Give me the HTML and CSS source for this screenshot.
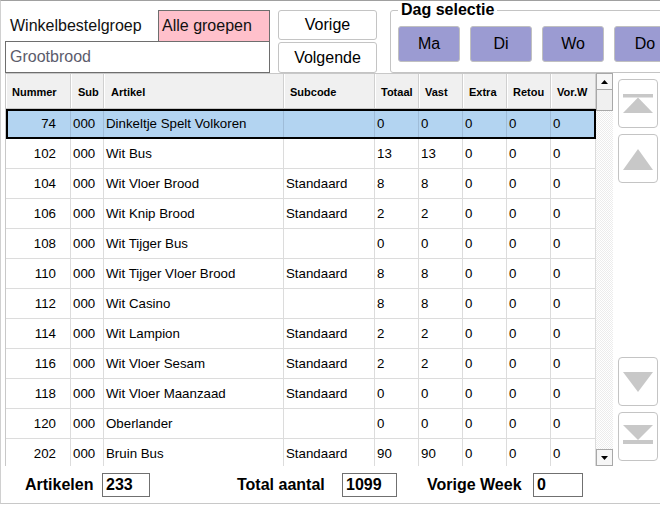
FILE: index.html
```html
<!DOCTYPE html>
<html>
<head>
<meta charset="utf-8">
<link rel="stylesheet" href="styles.css">
</head>
<body>
<div class="page">
  <div class="top">
    <div class="groep">
      <div class="groep-row">
        <span class="lbl">Winkelbestelgroep</span>
        <span class="pink">Alle groepen</span>
      </div>
      <div class="input">Grootbrood</div>
    </div>
    <div class="nav">
      <button class="btn">Vorige</button>
      <button class="btn btn-tall">Volgende</button>
    </div>
    <fieldset class="dag">
      <legend>Dag selectie</legend>
      <div class="days">
        <button class="day">Ma</button>
        <button class="day">Di</button>
        <button class="day">Wo</button>
        <button class="day">Do</button>
      </div>
    </fieldset>
  </div>

  <div class="main">
    <div class="grid">
      <div class="table">
        <div class="row thead">
          <span>Nummer</span><span class="p7">Sub</span><span class="p7">Artikel</span><span>Subcode</span><span>Totaal</span><span>Vast</span><span>Extra</span><span>Retou</span><span>Vor.W</span>
        </div>
        <div class="row tr sel"><span class="num">74</span><span>000</span><span>Dinkeltje Spelt Volkoren</span><span></span><span>0</span><span>0</span><span>0</span><span>0</span><span>0</span></div>
        <div class="row tr"><span class="num">102</span><span>000</span><span>Wit Bus</span><span></span><span>13</span><span>13</span><span>0</span><span>0</span><span>0</span></div>
        <div class="row tr"><span class="num">104</span><span>000</span><span>Wit Vloer Brood</span><span>Standaard</span><span>8</span><span>8</span><span>0</span><span>0</span><span>0</span></div>
        <div class="row tr"><span class="num">106</span><span>000</span><span>Wit Knip Brood</span><span>Standaard</span><span>2</span><span>2</span><span>0</span><span>0</span><span>0</span></div>
        <div class="row tr"><span class="num">108</span><span>000</span><span>Wit Tijger Bus</span><span></span><span>0</span><span>0</span><span>0</span><span>0</span><span>0</span></div>
        <div class="row tr"><span class="num">110</span><span>000</span><span>Wit Tijger Vloer Brood</span><span>Standaard</span><span>8</span><span>8</span><span>0</span><span>0</span><span>0</span></div>
        <div class="row tr"><span class="num">112</span><span>000</span><span>Wit Casino</span><span></span><span>8</span><span>8</span><span>0</span><span>0</span><span>0</span></div>
        <div class="row tr"><span class="num">114</span><span>000</span><span>Wit Lampion</span><span>Standaard</span><span>2</span><span>2</span><span>0</span><span>0</span><span>0</span></div>
        <div class="row tr"><span class="num">116</span><span>000</span><span>Wit Vloer Sesam</span><span>Standaard</span><span>2</span><span>2</span><span>0</span><span>0</span><span>0</span></div>
        <div class="row tr"><span class="num">118</span><span>000</span><span>Wit Vloer Maanzaad</span><span>Standaard</span><span>0</span><span>0</span><span>0</span><span>0</span><span>0</span></div>
        <div class="row tr"><span class="num">120</span><span>000</span><span>Oberlander</span><span></span><span>0</span><span>0</span><span>0</span><span>0</span><span>0</span></div>
        <div class="row tr"><span class="num">202</span><span>000</span><span>Bruin Bus</span><span>Standaard</span><span>90</span><span>90</span><span>0</span><span>0</span><span>0</span></div>
      </div>
      <div class="scroll">
        <div class="sb-btn"><svg width="7" height="4" viewBox="0 0 7 4"><polygon points="0,4 7,4 3.5,0" fill="#000"/></svg></div>
        <div class="sb-thumb"></div>
        <div class="sb-track"></div>
        <div class="sb-btn"><svg width="7" height="4" viewBox="0 0 7 4"><polygon points="0,0 7,0 3.5,4" fill="#000"/></svg></div>
      </div>
    </div>
    <div class="side">
      <button class="side-btn"><svg width="38" height="47" viewBox="0 0 38 47"><rect x="4" y="14" width="30" height="3.5" fill="#c8c8c8"/><polygon points="4,33 34,33 19,17.5" fill="#c8c8c8"/></svg></button>
      <button class="side-btn"><svg width="38" height="47" viewBox="0 0 38 47"><polygon points="4,35 34,35 19,14" fill="#c8c8c8"/></svg></button>
      <button class="side-btn push"><svg width="38" height="47" viewBox="0 0 38 47"><polygon points="4,14 34,14 19,34" fill="#c8c8c8"/></svg></button>
      <button class="side-btn"><svg width="38" height="47" viewBox="0 0 38 47"><polygon points="4,12 34,12 19,27" fill="#c8c8c8"/><rect x="4" y="27" width="30" height="4" fill="#c8c8c8"/></svg></button>
    </div>
  </div>

  <div class="footer">
    <span class="f-lbl f1">Artikelen</span>
    <span class="f-box b1">233</span>
    <span class="f-lbl f2">Total aantal</span>
    <span class="f-box b2">1099</span>
    <span class="f-lbl f3">Vorige Week</span>
    <span class="f-box b3">0</span>
  </div>
</div>
</body>
</html>
```
FILE: styles.css
```css
html, body {
  margin: 0;
  padding: 0;
  background: #fff;
}

.page {
  width: 660px;
  height: 504px;
  box-sizing: border-box;
  border-top: 1px solid #a0a0a0;
  border-left: 1px solid #d0d0d0;
  border-bottom: 1px solid #c8c8c8;
  overflow: hidden;
  display: flex;
  flex-direction: column;
  font-family: "Liberation Sans", Arial, sans-serif;
  color: #000;
}

/* ---------- top ---------- */
.top {
  display: flex;
  height: 72px;
  flex: none;
}

.groep {
  margin-left: 4px;
  width: 265px;
  flex: none;
}

.groep-row {
  display: flex;
  margin-top: 9px;
  height: 32px;
}

.lbl {
  width: 153px;
  box-sizing: border-box;
  padding-left: 5px;
  font-size: 16px;
  line-height: 32px;
  color: #111;
}

.pink {
  width: 112px;
  box-sizing: border-box;
  border: 1px solid #6e6e6e;
  background: #ffc0cb;
  padding-left: 3px;
  font-size: 16px;
  line-height: 30px;
  color: #111;
}

.input {
  margin-top: -1px;
  height: 32px;
  box-sizing: border-box;
  border: 1px solid #6e6e6e;
  padding-left: 4px;
  font-size: 16px;
  line-height: 30px;
  color: #5c5c6c;
}

.nav {
  margin-left: 8px;
  padding-top: 9px;
  width: 99px;
  flex: none;
  display: flex;
  flex-direction: column;
  gap: 2px;
}

.btn {
  height: 30px;
  box-sizing: border-box;
  border: 1px solid #c4c4c4;
  border-radius: 3px;
  background: #fff;
  padding: 0;
  font-family: "Liberation Sans", Arial, sans-serif;
  font-size: 16px;
  color: #000;
}

.btn-tall {
  height: 31px;
}

.dag {
  margin: 0 0 0 13px;
  padding: 7px 0 10px 7px;
  border: 1px solid #c4c4c4;
  border-radius: 3px;
  flex: none;
  min-width: 0;
}

.dag legend {
  padding: 0 3px;
  font-size: 16px;
  font-weight: bold;
  line-height: 18px;
}

.days {
  display: flex;
  gap: 10px;
}

.day {
  width: 62px;
  height: 36px;
  box-sizing: border-box;
  border: 1px solid #c0c0c0;
  border-radius: 3px;
  background: #9b9bd2;
  padding: 0;
  font-family: "Liberation Sans", Arial, sans-serif;
  font-size: 16px;
  color: #000;
}

/* ---------- grid ---------- */
.main {
  display: flex;
  height: 393px;
  flex: none;
}

.grid {
  margin-left: 4px;
  display: flex;
  border-left: 1px solid #c8c8c8;
  flex: none;
}

.table {
  width: 590px;
  display: flex;
  flex-direction: column;
  overflow: hidden;
}

.row {
  display: grid;
  grid-template-columns: 65px 33px 180px 91px 44px 44px 44px 44px 45px;
  flex: none;
}

.row > span {
  box-sizing: border-box;
  white-space: nowrap;
  overflow: hidden;
}

.thead {
  height: 36px;
  box-sizing: border-box;
  border-top: 1px solid #c8c8c8;
  border-bottom: 1px solid #c8c8c8;
  background: #f0f0f0;
}

.thead > span {
  padding-left: 6px;
  padding-top: 2px;
  line-height: 32px;
  font-size: 11px;
  font-weight: bold;
  border-right: 1px solid #d0d0d0;
  box-shadow: inset 1px 0 0 #fff;
}

.thead > span.p7 {
  padding-left: 7px;
}

.tr {
  height: 30px;
  box-sizing: border-box;
  border-bottom: 1px solid #dcdcdc;
  font-size: 13.3px;
  background: #fff;
}

.tr > span {
  padding-left: 2px;
  line-height: 30px;
  border-right: 1px solid #dcdcdc;
}

.tr > span.num {
  text-align: right;
  padding-left: 0;
  padding-right: 14px;
}

.tr.sel {
  background: #b3d4f1;
  outline: 2px solid #000;
  outline-offset: -2px;
}

.tr.sel > span {
  border-right-color: #9fbcd8;
}

/* ---------- scrollbar ---------- */
.scroll {
  width: 17px;
  display: flex;
  flex-direction: column;
  background: repeating-conic-gradient(#ececec 0 25%, #fff 0 50%) 0 0 / 2px 2px;
}

.sb-btn {
  height: 17px;
  box-sizing: border-box;
  border: 1px solid #a8a8a8;
  background: #f6f6f6;
  display: flex;
  align-items: center;
  justify-content: center;
  flex: none;
}

.sb-thumb {
  height: 21px;
  box-sizing: border-box;
  border: 1px solid #a8a8a8;
  border-top: none;
  background: #f0f0f0;
  flex: none;
}

.sb-track {
  flex: 1;
}

/* ---------- side nav ---------- */
.side {
  margin-left: 5px;
  width: 40px;
  flex: none;
  display: flex;
  flex-direction: column;
  gap: 6px;
  padding-top: 6px;
  padding-bottom: 5px;
  box-sizing: border-box;
}

.side-btn {
  height: 49px;
  box-sizing: border-box;
  border: 1px solid #c4c4c4;
  border-radius: 4px;
  background: #fff;
  padding: 0;
  display: flex;
  flex: none;
}

.side-btn.push {
  margin-top: auto;
}

/* ---------- footer ---------- */
.footer {
  flex: 1;
  display: flex;
  align-items: center;
  font-size: 16px;
  font-weight: bold;
}

.f-lbl {
  flex: none;
}

.f1 { margin-left: 24px; width: 77px; }
.f2 { margin-left: 87px; width: 105px; }
.f3 { margin-left: 30px; width: 106px; }

.f-box {
  height: 24px;
  box-sizing: border-box;
  border: 1px solid #707070;
  padding-left: 3px;
  line-height: 22px;
  flex: none;
}

.b1 { width: 48px; }
.b2 { width: 55px; }
.b3 { width: 50px; }
```
